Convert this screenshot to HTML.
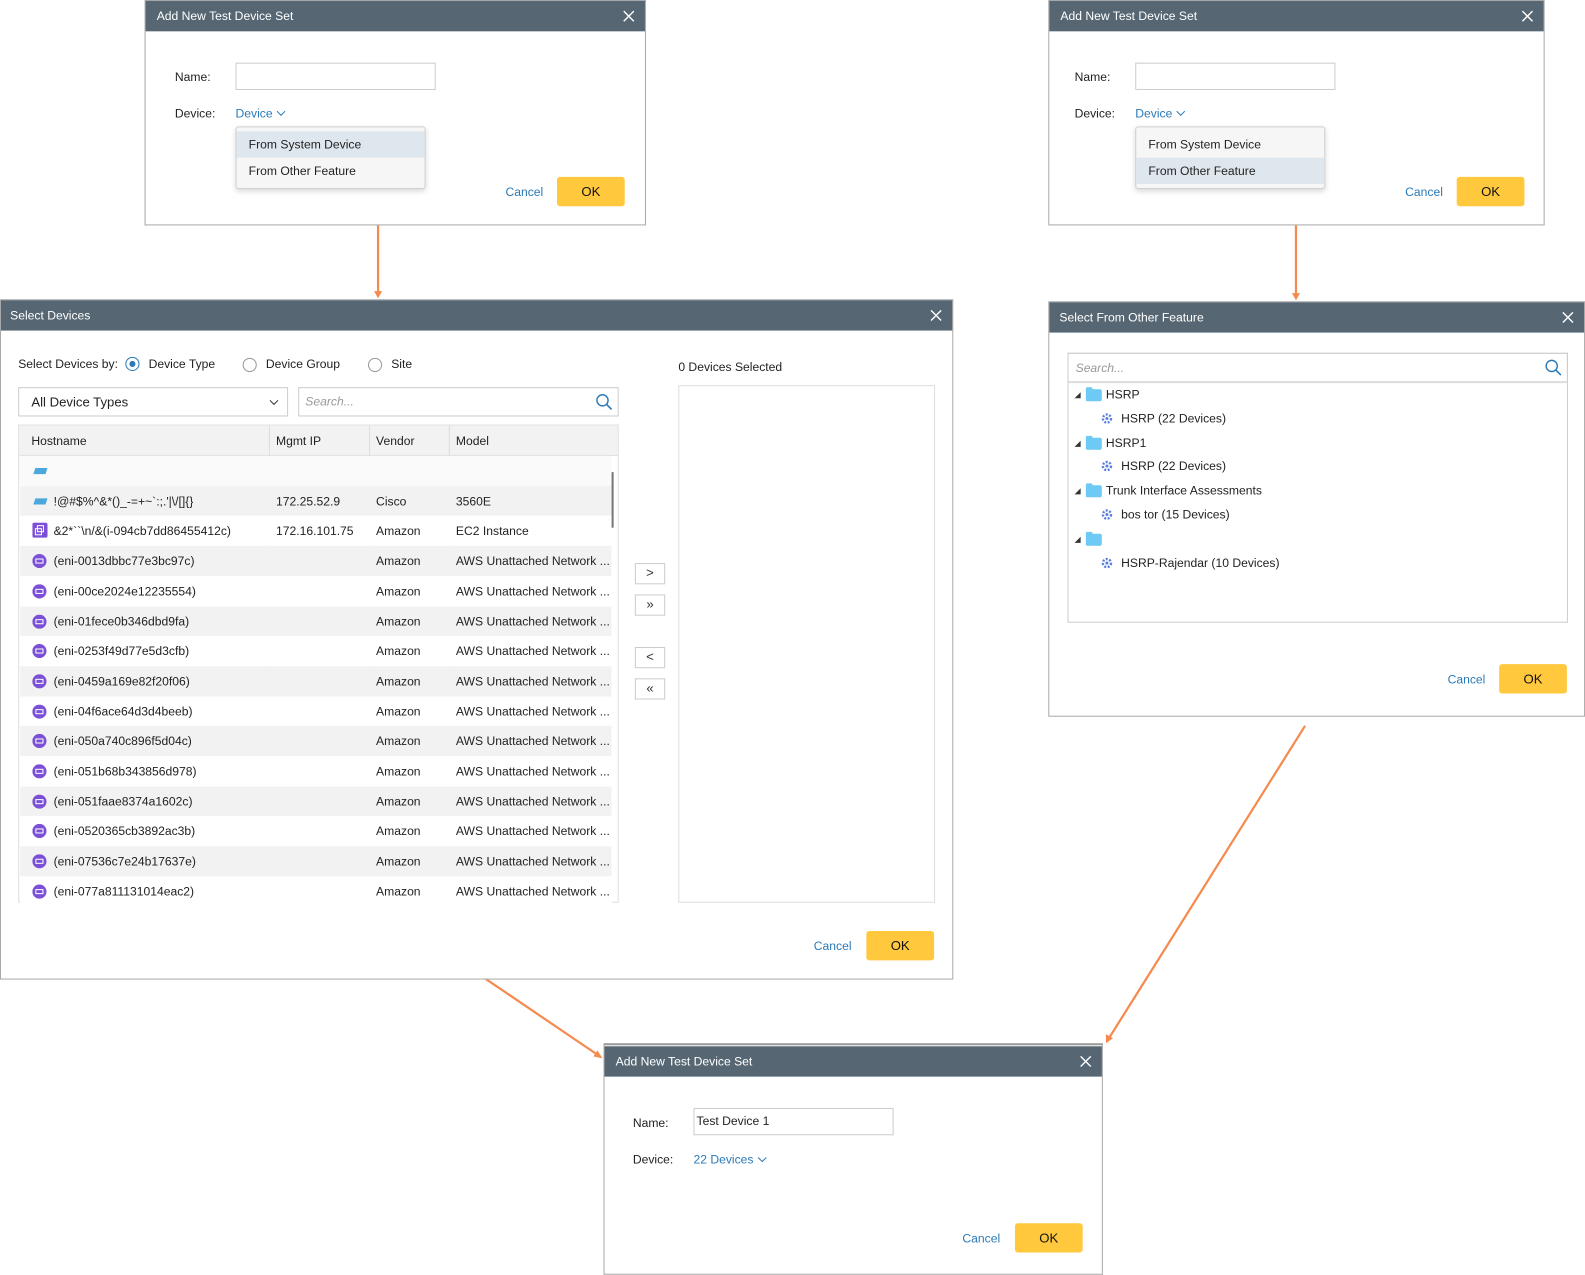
<!DOCTYPE html>
<html><head><meta charset="utf-8"><style>
*{box-sizing:border-box;margin:0;padding:0}
body{width:1585px;height:1275px;background:#fff;overflow:hidden;font-family:"Liberation Sans",sans-serif;font-size:12px;color:#222}
#w{position:absolute;left:0;top:0;width:1568px;height:1261px;transform:scale(1.0109);transform-origin:0 0}
.a{position:absolute}
.dlg{position:absolute;border:1px solid #a8a8a8;background:#fff}
.hd{position:absolute;left:0;top:0;right:0;height:30px;background:#566773;color:#fff;font-size:12px;line-height:30px;padding-left:11px}
.x{position:absolute;right:10px;top:9px;width:12px;height:12px}
.inp{position:absolute;border:1px solid #ccc;background:#fff}
.lnk{color:#2a7ab8}
.ok{position:absolute;background:#ffc83d;border-radius:3px;width:67px;height:29px;text-align:center;line-height:29px;font-size:13px;color:#111}
.cn{position:absolute;color:#2a7ab8;font-size:12px}
.menu{position:absolute;background:#f6f6f6;border:1px solid #d0d0d0;border-radius:3px;box-shadow:0 2px 5px rgba(0,0,0,.15)}
.mi{height:26px;line-height:26px;padding-left:12px;font-size:12px}
.row{position:absolute;left:19px;width:585px;height:30px;line-height:30px;font-size:12px}
.row span{position:absolute;white-space:nowrap;overflow:hidden}
.tb{position:absolute;width:30px;height:21px;border:1px solid #ccc;background:#fff;text-align:center;line-height:18px;font-size:13px;color:#333}
</style></head><body><div id="w">
<svg class="a" style="left:0;top:0" width="1568" height="1261">
<g stroke="#f58a4f" stroke-width="2.2" fill="#f58a4f">
<line x1="374" y1="220" x2="374" y2="290"/><polygon points="370,288 378,288 374,295" stroke="none"/>
<line x1="1282" y1="222" x2="1282" y2="292"/><polygon points="1278,290 1286,290 1282,297" stroke="none"/>
<line x1="477" y1="966" x2="592" y2="1044"/><polygon points="596,1047 587,1045 591,1039" stroke="none"/>
<line x1="1291" y1="718" x2="1097" y2="1027"/><polygon points="1094,1032 1094,1023 1101,1027" stroke="none"/>
</g></svg>

<!-- D1 -->
<div class="dlg" style="left:143px;top:0;width:496px;height:223px">
<div class="hd">Add New Test Device Set<svg class="x" viewBox="0 0 12 12"><path d="M1 1L11 11M11 1L1 11" stroke="#fff" stroke-width="1.4"/></svg></div>
<div class="a" style="left:29px;top:68px">Name:</div>
<div class="inp" style="left:89px;top:61px;width:198px;height:27px"></div>
<div class="a" style="left:29px;top:104px">Device:</div>
<div class="a lnk" style="left:89px;top:104px">Device <svg width="10" height="8" viewBox="0 0 10 8"><path d="M1 2L5 6L9 2" stroke="#2a7ab8" fill="none"/></svg></div>
<div class="menu" style="left:89px;top:124px;width:188px;height:62px"><div style="height:4px"></div><div class="mi" style="background:#dfe7ee">From System Device</div><div class="mi">From Other Feature</div></div>
<div class="cn" style="left:356px;top:182px">Cancel</div>
<div class="ok" style="left:407px;top:174px">OK</div>
</div>

<!-- D2 -->
<div class="dlg" style="left:1037px;top:0;width:491px;height:223px">
<div class="hd">Add New Test Device Set<svg class="x" viewBox="0 0 12 12"><path d="M1 1L11 11M11 1L1 11" stroke="#fff" stroke-width="1.4"/></svg></div>
<div class="a" style="left:25px;top:68px">Name:</div>
<div class="inp" style="left:85px;top:61px;width:198px;height:27px"></div>
<div class="a" style="left:25px;top:104px">Device:</div>
<div class="a lnk" style="left:85px;top:104px">Device <svg width="10" height="8" viewBox="0 0 10 8"><path d="M1 2L5 6L9 2" stroke="#2a7ab8" fill="none"/></svg></div>
<div class="menu" style="left:85px;top:124px;width:188px;height:62px"><div style="height:4px"></div><div class="mi">From System Device</div><div class="mi" style="background:#dfe7ee">From Other Feature</div></div>
<div class="cn" style="left:352px;top:182px">Cancel</div>
<div class="ok" style="left:403px;top:174px">OK</div>
</div>

<!-- D3 -->
<div class="dlg" style="left:0;top:296px;width:943px;height:673px">
<div class="hd" style="padding-left:9px">Select Devices<svg class="x" viewBox="0 0 12 12"><path d="M1 1L11 11M11 1L1 11" stroke="#fff" stroke-width="1.4"/></svg></div>
<div class="a" style="left:17px;top:56px">Select Devices by:</div>
<div class="a" style="left:123px;top:56px;width:14px;height:14px;border:1.5px solid #2a7ab8;border-radius:50%"><div style="margin:2.5px;width:6px;height:6px;border-radius:50%;background:#2a7ab8"></div></div>
<div class="a" style="left:146px;top:56px">Device Type</div>
<div class="a" style="left:239px;top:57px;width:14px;height:14px;border:1.5px solid #999;border-radius:50%"></div>
<div class="a" style="left:262px;top:56px">Device Group</div>
<div class="a" style="left:363px;top:57px;width:14px;height:14px;border:1.5px solid #999;border-radius:50%"></div>
<div class="a" style="left:386px;top:56px">Site</div>
<div class="inp" style="left:17px;top:86px;width:267px;height:29px;line-height:27px;padding-left:12px;font-size:13px">All Device Types<svg class="a" style="right:8px;top:11px" width="10" height="7" viewBox="0 0 10 7"><path d="M1 1L5 5L9 1" stroke="#333" fill="none"/></svg></div>
<div class="inp" style="left:294px;top:86px;width:317px;height:29px;line-height:27px;padding-left:6px;font-style:italic;color:#999">Search...<svg class="a" style="right:4px;top:5px" width="18" height="18" viewBox="0 0 18 18"><circle cx="7" cy="7" r="5.5" stroke="#2a7ab8" stroke-width="1.4" fill="none"/><path d="M11 11L16 16" stroke="#2a7ab8" stroke-width="1.6"/></svg></div>
<div class="a" style="left:17px;top:123px;width:594px;height:473px;border:1px solid #ddd;overflow:hidden">
<div class="a" style="left:0;top:0;width:594px;height:30px;background:#f2f2f2;line-height:30px;border-bottom:1px solid #e0e0e0">
<span class="a" style="left:12px">Hostname</span><span class="a" style="left:254px">Mgmt IP</span><span class="a" style="left:353px">Vendor</span><span class="a" style="left:432px">Model</span></div>
<div class="a" style="left:247px;top:0;width:1px;height:473px;background:#ddd"></div>
<div class="a" style="left:346px;top:0;width:1px;height:473px;background:#ddd"></div>
<div class="a" style="left:425px;top:0;width:1px;height:473px;background:#ddd"></div>
<div class="a" style="left:585px;top:46px;width:3px;height:55px;background:#777"></div>
</div>
<div id="rows"></div>
<div class="tb" style="left:627px;top:260px">&gt;</div>
<div class="tb" style="left:627px;top:291px">»</div>
<div class="tb" style="left:627px;top:343px">&lt;</div>
<div class="tb" style="left:627px;top:374px">«</div>
<div class="a" style="left:670px;top:59px">0 Devices Selected</div>
<div class="a" style="left:670px;top:84px;width:254px;height:512px;border:1px solid #ddd"></div>
<div class="cn" style="left:804px;top:632px">Cancel</div>
<div class="ok" style="left:856px;top:624px">OK</div>
</div>

<!-- D4 -->
<div class="dlg" style="left:1037px;top:298px;width:531px;height:411px">
<div class="hd" style="padding-left:10px">Select From Other Feature<svg class="x" viewBox="0 0 12 12"><path d="M1 1L11 11M11 1L1 11" stroke="#fff" stroke-width="1.4"/></svg></div>
<div class="inp" style="left:18px;top:50px;width:495px;height:267px;border-color:#ccc"></div>
<div class="a" style="left:18px;top:50px;width:495px;height:30px;border:1px solid #ccc;border-bottom:2px solid #ddd;line-height:28px;padding-left:7px;font-style:italic;color:#999">Search...<svg class="a" style="right:4px;top:5px" width="18" height="18" viewBox="0 0 18 18"><circle cx="7" cy="7" r="5.5" stroke="#2a7ab8" stroke-width="1.4" fill="none"/><path d="M11 11L16 16" stroke="#2a7ab8" stroke-width="1.6"/></svg></div>
<div id="tree"></div>
<div class="cn" style="left:394px;top:366px">Cancel</div>
<div class="ok" style="left:445px;top:358px">OK</div>
</div>

<!-- D5 -->
<div class="dlg" style="left:597px;top:1032px;width:494px;height:229px;border-top:2px solid #999">
<div class="hd" style="top:1px;height:30px">Add New Test Device Set<svg class="x" viewBox="0 0 12 12"><path d="M1 1L11 11M11 1L1 11" stroke="#fff" stroke-width="1.4"/></svg></div>
<div class="a" style="left:28px;top:70px">Name:</div>
<div class="inp" style="left:88px;top:62px;width:198px;height:27px;line-height:25px;padding-left:2px">Test Device 1</div>
<div class="a" style="left:28px;top:106px">Device:</div>
<div class="a lnk" style="left:88px;top:106px">22 Devices <svg width="10" height="8" viewBox="0 0 10 8"><path d="M1 2L5 6L9 2" stroke="#2a7ab8" fill="none"/></svg></div>
<div class="cn" style="left:354px;top:184px">Cancel</div>
<div class="ok" style="left:406px;top:176px">OK</div>
</div>

<script>
var r=[["","","","",0],["!@#$%^&*()_-=+~`:;.'|\\/[]{}","172.25.52.9","Cisco","3560E",0],["&2*``\\n/&(i-094cb7dd86455412c)","172.16.101.75","Amazon","EC2 Instance",1],
["(eni-0013dbbc77e3bc97c)"],["(eni-00ce2024e12235554)"],["(eni-01fece0b346dbd9fa)"],["(eni-0253f49d77e5d3cfb)"],["(eni-0459a169e82f20f06)"],["(eni-04f6ace64d3d4beeb)"],["(eni-050a740c896f5d04c)"],["(eni-051b68b343856d978)"],["(eni-051faae8374a1602c)"],["(eni-0520365cb3892ac3b)"],["(eni-07536c7e24b17637e)"],["(eni-077a811131014eac2)"]];
var h="";
r.forEach(function(x,i){var t=154+i*29.7;var bg=i%2?'#f2f2f2':'#fff';if(i==0)bg='#fafafa';
var ic;
if(x[4]===0)ic='<svg class="a" style="left:12px;top:11px" width="16" height="8"><path d="M3 1H15L13 7H1Z" fill="#4aa8dc"/></svg>';
else if(x[4]===1)ic='<svg class="a" style="left:12px;top:7px" width="15" height="15"><rect width="15" height="15" rx="2" fill="#7b4fd6"/><rect x="5" y="3" width="6" height="6" fill="none" stroke="#fff"/><rect x="3" y="6" width="6" height="6" fill="none" stroke="#fff"/></svg>';
else ic='<svg class="a" style="left:12px;top:8px" width="14" height="14"><circle cx="7" cy="7" r="7" fill="#7b4fd6"/><rect x="3.5" y="5" width="7" height="4" fill="none" stroke="#fff"/></svg>';
var s=x.length==1?[x[0],"","Amazon","AWS Unattached Network ..."]:x;
h+='<div class="row" style="top:'+t+'px;background:'+bg+';width:585px">'+ic+'<span style="left:33px">'+s[0].replace(/&/g,'&amp;').replace(/</g,'&lt;')+'</span><span style="left:253px">'+s[1]+'</span><span style="left:352px">'+s[2]+'</span><span style="left:431px;width:160px">'+s[3]+'</span></div>';});
document.getElementById('rows').innerHTML=h;
var tr=[[0,"HSRP"],[1,"HSRP (22 Devices)"],[0,"HSRP1"],[1,"HSRP (22 Devices)"],[0,"Trunk Interface Assessments"],[1,"bos tor (15 Devices)"],[0,""],[1,"HSRP-Rajendar (10 Devices)"]];
var g="";
tr.forEach(function(x,i){var t=82+i*23.8;
if(x[0]==0)g+='<svg class="a" style="left:24px;top:'+(t+6)+'px" width="8" height="8"><path d="M7 1V7H1Z" fill="#333"/></svg><svg class="a" style="left:36px;top:'+(t+2)+'px" width="16" height="14"><path d="M0 2Q0 0 2 0H6L7 2H14Q16 2 16 4V12Q16 14 14 14H2Q0 14 0 12Z" fill="#6ccaf5"/></svg><div class="a" style="left:56px;top:'+(t+2)+'px">'+x[1]+'</div>';
else g+='<svg class="a" style="left:51px;top:'+(t+3)+'px" width="12" height="12"><circle cx="6" cy="6" r="4" fill="none" stroke="#5a7fe0" stroke-width="2.4" stroke-dasharray="2 1.5"/><circle cx="6" cy="6" r="1.5" fill="#5a7fe0"/></svg><div class="a" style="left:71px;top:'+(t+2)+'px">'+x[1]+'</div>';});
document.getElementById('tree').innerHTML=g;
</script>
</div></body></html>
